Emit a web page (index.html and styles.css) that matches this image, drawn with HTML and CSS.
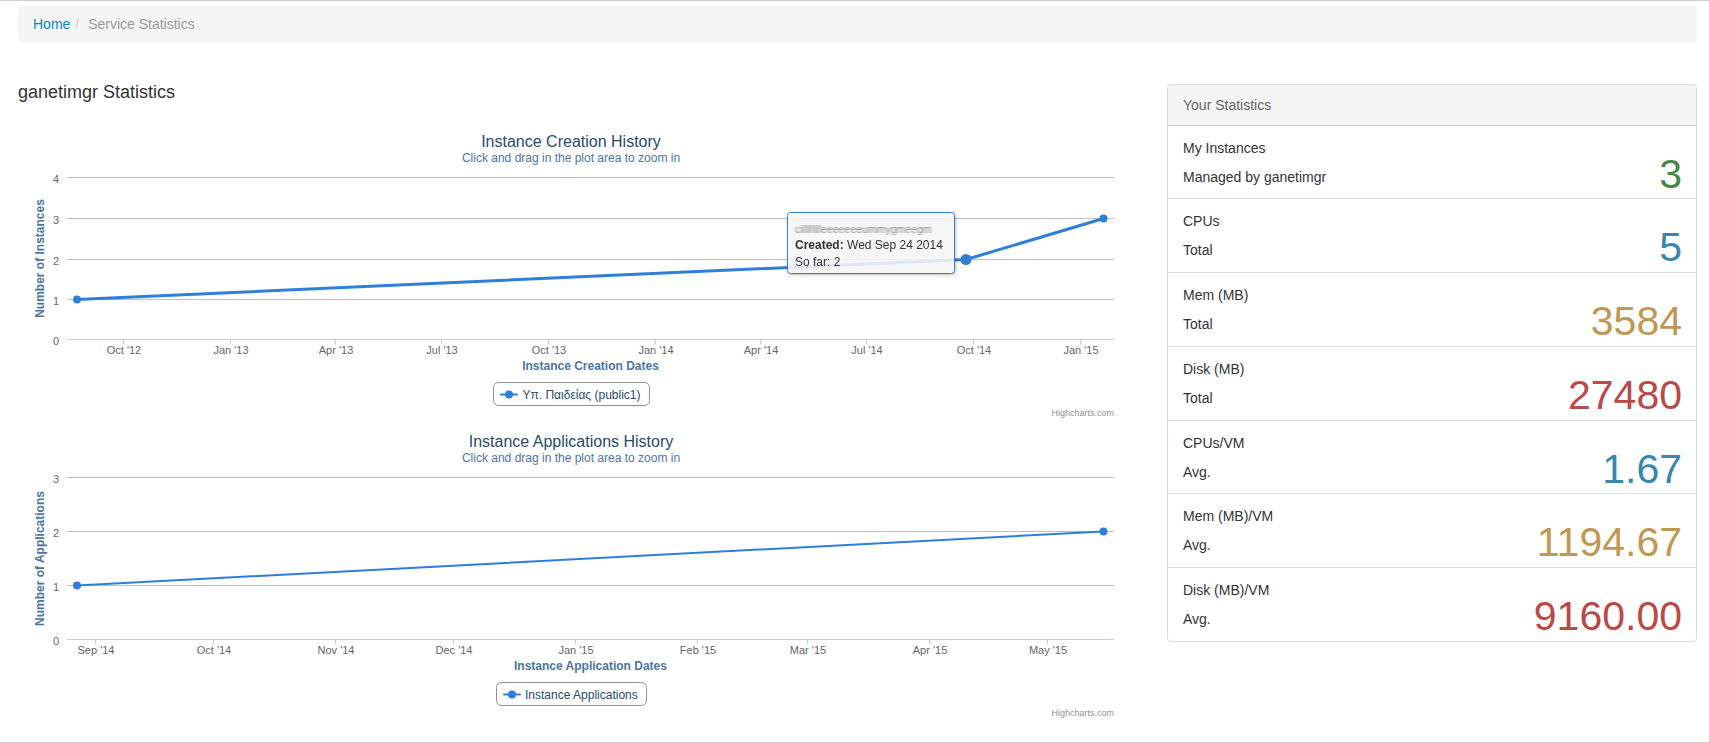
FILE: index.html
```html
<!DOCTYPE html>
<html lang="en">
<head>
<meta charset="utf-8">
<title>ganetimgr Statistics</title>
<link rel="stylesheet" href="styles.css">
</head>
<body>
<div class="topline"></div>
<div class="page">
  <div class="breadcrumb"><a href="#">Home</a><span class="divider">/</span> <span class="active">Service Statistics</span></div>
  <div class="main">
    <div class="left">
      <h4 class="page-title">ganetimgr Statistics</h4>

      <svg class="hc" width="1106" height="300" viewBox="0 0 1106 300">
        <defs>
          <filter id="blur" x="-5%" y="-60%" width="110%" height="220%"><feGaussianBlur stdDeviation="1.1 0.6"/></filter>
        </defs>
        <text class="hc-title" x="553" y="28" text-anchor="middle">Instance Creation History</text>
        <text class="hc-sub" x="553" y="43" text-anchor="middle">Click and drag in the plot area to zoom in</text>
        <path class="grid" d="M49 58.5H1096M49 99.5H1096M49 140.5H1096M49 180.5H1096"/>
        <path class="axis" d="M49 220.5H1096M105.5 220.5V225.5M212.5 220.5V225.5M317.5 220.5V225.5M423.5 220.5V225.5M530.5 220.5V225.5M637.5 220.5V225.5M742.5 220.5V225.5M848.5 220.5V225.5M955.5 220.5V225.5M1062.5 220.5V225.5"/>
        <g class="ylab" text-anchor="end">
          <text x="41" y="64">4</text>
          <text x="41" y="105">3</text>
          <text x="41" y="146">2</text>
          <text x="41" y="186">1</text>
          <text x="41" y="226">0</text>
        </g>
        <g class="xlab" text-anchor="middle">
          <text x="106" y="235">Oct '12</text>
          <text x="213" y="235">Jan '13</text>
          <text x="318" y="235">Apr '13</text>
          <text x="424" y="235">Jul '13</text>
          <text x="531" y="235">Oct '13</text>
          <text x="638" y="235">Jan '14</text>
          <text x="743" y="235">Apr '14</text>
          <text x="849" y="235">Jul '14</text>
          <text x="956" y="235">Oct '14</text>
          <text x="1063" y="235">Jan '15</text>
        </g>
        <text class="hc-axis-title" transform="translate(26 139.5) rotate(-90)" text-anchor="middle">Number of Instances</text>
        <text class="hc-axis-title" x="572.5" y="251" text-anchor="middle">Instance Creation Dates</text>
        <path class="series thick" d="M59 180.5L948 140.5L1085.5 99.5"/>
        <circle class="marker" cx="59" cy="180.5" r="4"/>
        <circle class="marker" cx="1085.5" cy="99.5" r="4"/>
        <circle class="marker" cx="948" cy="140.5" r="5.5"/>
        <rect class="legend-box" x="475.5" y="263.5" width="156" height="23" rx="5"/>
        <path class="series" d="M483 275.5H499"/>
        <circle class="marker" cx="491" cy="275.5" r="4"/>
        <text class="legend-text" x="504.5" y="280">Υπ. Παιδείας (public1)</text>
        <text class="credits" x="1096" y="297" text-anchor="end">Highcharts.com</text>
        <g class="tip">
          <rect class="tip-box" x="769.5" y="93.5" width="167" height="61" rx="3"/>
          <text class="tip-head" x="777" y="114" filter="url(#blur)">cilllllllleeeeeeeummygmeegm</text>
          <text class="tip-text" x="777" y="130"><tspan class="b">Created:</tspan> Wed Sep 24 2014</text>
          <text class="tip-text" x="777" y="147">So far: 2</text>
        </g>
      </svg>

      <svg class="hc" width="1106" height="300" viewBox="0 0 1106 300">
        <text class="hc-title" x="553" y="28" text-anchor="middle">Instance Applications History</text>
        <text class="hc-sub" x="553" y="43" text-anchor="middle">Click and drag in the plot area to zoom in</text>
        <path class="grid" d="M49 58.5H1096M49 112.5H1096M49 166.5H1096"/>
        <path class="axis" d="M49 220.5H1096M77.5 220.5V225.5M195.5 220.5V225.5M317.5 220.5V225.5M435.5 220.5V225.5M557.5 220.5V225.5M679.5 220.5V225.5M789.5 220.5V225.5M911.5 220.5V225.5M1029.5 220.5V225.5"/>
        <g class="ylab" text-anchor="end">
          <text x="41" y="64">3</text>
          <text x="41" y="118">2</text>
          <text x="41" y="172">1</text>
          <text x="41" y="226">0</text>
        </g>
        <g class="xlab" text-anchor="middle">
          <text x="78" y="235">Sep '14</text>
          <text x="196" y="235">Oct '14</text>
          <text x="318" y="235">Nov '14</text>
          <text x="436" y="235">Dec '14</text>
          <text x="558" y="235">Jan '15</text>
          <text x="680" y="235">Feb '15</text>
          <text x="790" y="235">Mar '15</text>
          <text x="912" y="235">Apr '15</text>
          <text x="1030" y="235">May '15</text>
        </g>
        <text class="hc-axis-title" transform="translate(26 139.5) rotate(-90)" text-anchor="middle">Number of Applications</text>
        <text class="hc-axis-title" x="572.5" y="251" text-anchor="middle">Instance Application Dates</text>
        <path class="series" d="M59 166.5L1085.5 112.5"/>
        <circle class="marker" cx="59" cy="166.5" r="4"/>
        <circle class="marker" cx="1085.5" cy="112.5" r="4"/>
        <rect class="legend-box" x="478.5" y="263.5" width="150" height="23" rx="5"/>
        <path class="series" d="M486 275.5H502"/>
        <circle class="marker" cx="494" cy="275.5" r="4"/>
        <text class="legend-text" x="507" y="280">Instance Applications</text>
        <text class="credits" x="1096" y="297" text-anchor="end">Highcharts.com</text>
      </svg>
    </div>

    <div class="panel">
      <div class="panel-heading">Your Statistics</div>
      <div class="stat">
        <div class="stat-labels"><div class="l1">My Instances</div><div>Managed by ganetimgr</div></div>
        <div class="stat-value success">3</div>
      </div>
      <div class="stat">
        <div class="stat-labels"><div class="l1">CPUs</div><div>Total</div></div>
        <div class="stat-value info">5</div>
      </div>
      <div class="stat">
        <div class="stat-labels"><div class="l1">Mem (MB)</div><div>Total</div></div>
        <div class="stat-value warning">3584</div>
      </div>
      <div class="stat">
        <div class="stat-labels"><div class="l1">Disk (MB)</div><div>Total</div></div>
        <div class="stat-value error">27480</div>
      </div>
      <div class="stat">
        <div class="stat-labels"><div class="l1">CPUs/VM</div><div>Avg.</div></div>
        <div class="stat-value info">1.67</div>
      </div>
      <div class="stat">
        <div class="stat-labels"><div class="l1">Mem (MB)/VM</div><div>Avg.</div></div>
        <div class="stat-value warning">1194.67</div>
      </div>
      <div class="stat">
        <div class="stat-labels"><div class="l1">Disk (MB)/VM</div><div>Avg.</div></div>
        <div class="stat-value error">9160.00</div>
      </div>
    </div>
  </div>
</div>
<div class="footline"></div>
</body>
</html>
```

FILE: styles.css
```css
* { box-sizing: border-box; }

html, body {
  margin: 0;
  padding: 0;
  background: #fff;
}

body {
  font-family: "Liberation Sans", Arial, Helvetica, sans-serif;
  font-size: 14px;
  line-height: 20px;
  color: #333;
  overflow: hidden;
}

.topline {
  height: 1px;
  background: #d0d0d0;
}

.page {
  padding: 0 12px 0 18px;
}

.breadcrumb {
  margin-top: 5px;
  height: 36px;
  padding: 8px 15px;
  background: #f5f5f5;
  border-radius: 4px;
  white-space: nowrap;
}

.breadcrumb a {
  color: #0088cc;
  text-decoration: none;
}

.breadcrumb .divider {
  color: #ccc;
  padding: 0 5px;
}

.breadcrumb .active {
  color: #999;
}

.main {
  display: flex;
  align-items: flex-start;
}

.left {
  width: 1106px;
  flex: none;
}

.page-title {
  margin: 40px 0 17px;
  font-size: 18px;
  line-height: 20px;
  font-weight: normal;
  color: #333;
}

.hc {
  display: block;
  font-family: "Liberation Sans", Arial, Helvetica, sans-serif;
}

.hc-title {
  font-size: 16px;
  fill: #274b6d;
}

.hc-sub {
  font-size: 12px;
  fill: #4d759e;
}

.grid {
  stroke: #c0c0c0;
  stroke-width: 1;
  fill: none;
}

.axis {
  stroke: #c0d0e0;
  stroke-width: 1;
  fill: none;
}

.ylab text,
.xlab text {
  font-size: 11px;
  fill: #666;
}

.hc-axis-title {
  font-size: 12px;
  font-weight: bold;
  fill: #4d759e;
}

.series {
  stroke: #2f7ed8;
  stroke-width: 2;
  fill: none;
  stroke-linejoin: round;
  stroke-linecap: round;
}

.series.thick {
  stroke-width: 3;
}

.marker {
  fill: #2f7ed8;
}

.legend-box {
  fill: none;
  stroke: #909090;
  stroke-width: 1;
}

.legend-text {
  font-size: 12px;
  fill: #274b6d;
}

.credits {
  font-size: 9px;
  fill: #909090;
}

.tip {
  filter: drop-shadow(1px 1px 1.5px rgba(0, 0, 0, 0.28));
}

.tip-box {
  fill: rgba(255, 255, 255, 0.85);
  stroke: #2f7ed8;
  stroke-width: 1;
}

.tip-head {
  font-size: 10.5px;
  fill: #8a8a8a;
}

.tip-text {
  font-size: 12px;
  fill: #333;
}

.tip-text .b {
  font-weight: bold;
}

.panel {
  width: 530px;
  flex: none;
  margin-left: auto;
  margin-top: 41.5px;
  border: 1px solid #ddd;
  border-radius: 4px;
  overflow: hidden;
}

.panel-heading {
  padding: 10px 15px;
  background: #f5f5f5;
  border-bottom: 1px solid #cfcfd4;
  color: #666;
}

.stat {
  display: flex;
  justify-content: space-between;
  padding: 12px 14px 11.75px 15px;
  border-top: 1px solid #ddd;
}

.stat:nth-child(2) {
  border-top: none;
}

.stat-labels .l1 {
  margin-bottom: 9px;
}

.stat-value {
  align-self: flex-end;
  font-size: 41px;
  line-height: 40px;
  margin-bottom: -7px;
}

.success { color: #468847; }
.info { color: #3a87ad; }
.warning { color: #c09853; }
.error { color: #b94a48; }

.footline {
  margin-top: 23px;
  height: 1px;
  background: #d0d0d0;
}
```
